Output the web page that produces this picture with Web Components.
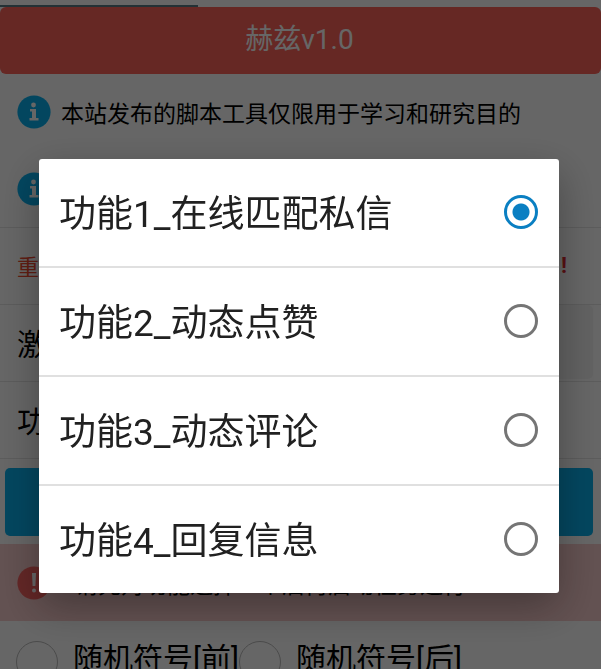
<!DOCTYPE html>
<html lang="zh-CN">
<head>
<meta charset="UTF-8">
<meta name="viewport" content="width=device-width, initial-scale=1">
<title>赫兹v1.0</title>
<style>
  html, body { height: 100%; }
  body {
    margin: 0;
    overflow: hidden;
    background: #fff;
    color: #000;
    font-family: Roboto, "Noto Sans CJK SC", sans-serif;
  }
</style>
</head>
<body>
<script-page></script-page>
<select-dialog>
  <select-option checked>功能1_在线匹配私信</select-option>
  <select-option>功能2_动态点赞</select-option>
  <select-option>功能3_动态评论</select-option>
  <select-option>功能4_回复信息</select-option>
</select-dialog>

<script>
class StatusIcon extends HTMLElement {
  connectedCallback() {
    const warn = this.getAttribute("type") === "warn";
    const mark = warn
      ? `<path d="M15 7h4l-.6 13h-2.8z"/><circle cx="17" cy="24.500" r="2"/>`
      : `<circle cx="16.500" cy="10" r="2.400"/><path d="M13 14h6v9h2.500v2.500h-9V23H15v-6.500h-2z"/>`;
    this.attachShadow({ mode: "open" }).innerHTML = `
      <style>
        :host { display: block; flex: none; width: 34px; height: 34px; }
        svg { display: block; width: 100%; height: 100%; }
      </style>
      <svg viewBox="0 0 34 34" aria-hidden="true">
        <circle cx="17" cy="17" r="16.600" fill="${warn ? "#f76260" : "#09b0ee"}"/>
        <g fill="#fff">${mark}</g>
      </svg>
    `;
  }
}

class PageHeader extends HTMLElement {
  connectedCallback() {
    this.attachShadow({ mode: "open" }).innerHTML = `
      <style>
        :host { display: block; }
        .progress { height: 7px; display: flex; align-items: flex-end; }
        .progress i { width: 33%; height: 2px; background: #587c84; }
        h1 {
          margin: 0;
          padding: 0 2px 2px 0;
          border-radius: 6px;
          background: #ff645a;
          color: #fff;
          font-size: 28px;
          font-weight: 400;
          line-height: 65px;
          text-align: center;
        }
      </style>
      <div class="progress"><i></i></div>
      <h1><slot></slot></h1>
    `;
  }
}

class FormCell extends HTMLElement {
  connectedCallback() {
    this.attachShadow({ mode: "open" }).innerHTML = `
      <style>
        :host {
          display: flex;
          align-items: center;
          gap: 10px;
          box-sizing: border-box;
          height: 77px;
          padding: 0 8px 2px 17px;
          border-bottom: 1px solid #e5e5e5;
          font-size: 30px;
          white-space: nowrap;
        }
        :host([plain]) { border-color: transparent; }
        :host([note]) { padding-bottom: 0; font-size: 23px; }
        :host([alert]) { justify-content: space-between; padding-right: 34px; color: #ee4a30; font-size: 22px; }
        :host([tinted]) { padding-bottom: 0; gap: 24px; border: 0; background: #f8cccc; font-size: 23px; }
      </style>
      <slot></slot>
    `;
  }
}

class RadioChoice extends HTMLElement {
  connectedCallback() {
    this.attachShadow({ mode: "open" }).innerHTML = `
      <style>
        :host { display: block; }
        label { display: flex; align-items: center; gap: 15px; font-size: 30px; line-height: 36px; }
        span { padding-bottom: 6px; }
        input {
          appearance: none;
          box-sizing: border-box;
          width: 42px;
          height: 42px;
          margin: 0;
          border: 1px solid #bbb;
          border-radius: 50%;
        }
      </style>
      <label><input type="radio" name="symbol"><span><slot></slot></span></label>
    `;
  }
}

class ScriptPage extends HTMLElement {
  connectedCallback() {
    this.attachShadow({ mode: "open" }).innerHTML = `
      <style>
        :host { display: block; height: 100%; overflow: hidden; }
        input[type=text] {
          flex: 1;
          min-width: 0;
          align-self: stretch;
          box-sizing: border-box;
          border: 0;
          border-radius: 5px;
          background: #f5f5f5;
          font: inherit;
        }
        button {
          display: block;
          width: calc(100% - 13px);
          height: 68px;
          margin: 9px 8px 8px 5px;
          border: 0;
          border-radius: 5px;
          background: #09b0ee;
        }
        b { color: #dc2a30; }
        .choices { display: flex; padding: 20px 16px; }
      </style>
      <page-header>赫兹v1.0</page-header>
      <form-cell note plain><status-icon></status-icon><span>本站发布的脚本工具仅限用于学习和研究目的</span></form-cell>
      <form-cell note><status-icon></status-icon></form-cell>
      <form-cell alert><span>重</span><b>!</b></form-cell>
      <form-cell><label for="code">激</label><input id="code" type="text"></form-cell>
      <form-cell>功</form-cell>
      <button type="button" aria-label="确定"></button>
      <form-cell tinted><status-icon type="warn"></status-icon><span>请先对功能选择一个后再启动任务运行</span></form-cell>
      <div class="choices">
        <radio-choice>随机符号[前]</radio-choice>
        <radio-choice>随机符号[后]</radio-choice>
      </div>
    `;
  }
}

class SelectOption extends HTMLElement {
  connectedCallback() {
    const checked = this.hasAttribute("checked") ? "checked" : "";
    this.attachShadow({ mode: "open" }).innerHTML = `
      <style>
        :host { display: block; border-top: 2px solid #e0e0e0; }
        :host(:first-child) { border-top: 0; }
        label {
          display: flex;
          align-items: center;
          justify-content: space-between;
          height: 107px;
          padding: 0 21px 0 20px;
          color: #212121;
          font-size: 37px;
          white-space: nowrap;
        }
        span { padding-bottom: 2px; }
        input {
          appearance: none;
          flex: none;
          box-sizing: border-box;
          width: 34px;
          height: 34px;
          margin: 0;
          border: 3px solid #757575;
          border-radius: 50%;
        }
        input:checked {
          border-color: #0a7fc2;
          background: radial-gradient(circle, #0a7fc2 8px, #fff 9px);
        }
      </style>
      <label><span><slot></slot></span><input type="radio" ${checked}></label>
    `;
  }
}

class SelectDialog extends HTMLElement {
  connectedCallback() {
    this.attachShadow({ mode: "open" }).innerHTML = `
      <style>
        :host {
          position: fixed;
          inset: 0;
          display: flex;
          align-items: center;
          justify-content: center;
          box-sizing: border-box;
          padding: 82px 42px 0 39px;
          background: rgba(0, 0, 0, .6);
        }
        [role=dialog] {
          flex: 1;
          border-radius: 3px;
          background: #fff;
          box-shadow: 0 14px 40px rgba(0, 0, 0, .32);
        }
      </style>
      <div role="dialog" aria-modal="true"><slot></slot></div>
    `;
  }
}

customElements.define("status-icon", StatusIcon);
customElements.define("page-header", PageHeader);
customElements.define("form-cell", FormCell);
customElements.define("radio-choice", RadioChoice);
customElements.define("script-page", ScriptPage);
customElements.define("select-option", SelectOption);
customElements.define("select-dialog", SelectDialog);
</script>
</body>
</html>
